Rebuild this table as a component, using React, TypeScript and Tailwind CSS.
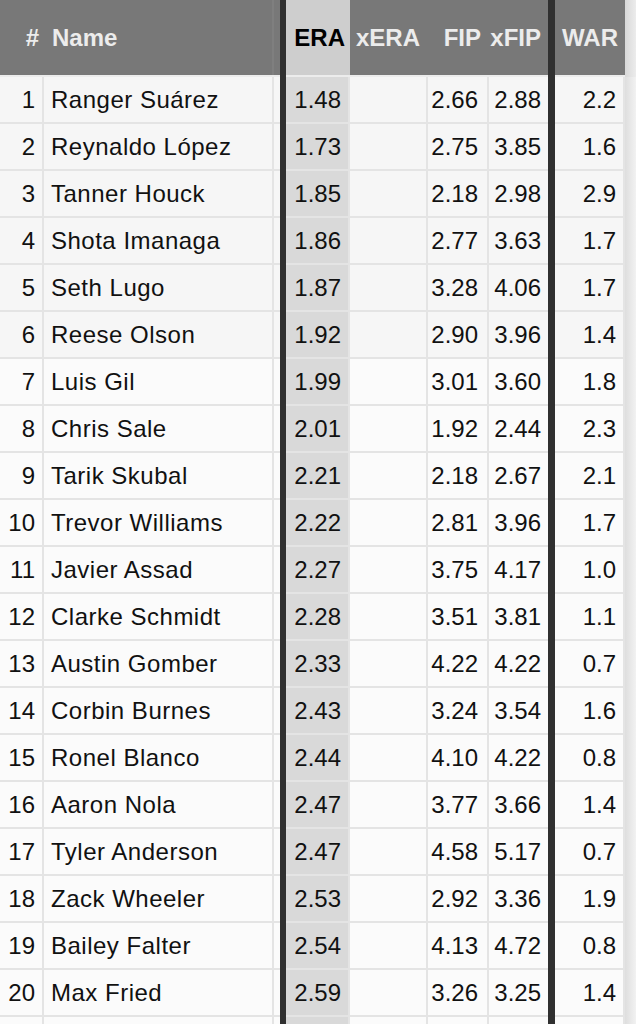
const pitchers = [
  { rank: 1, name: "Ranger Suárez", era: "1.48", fip: "2.66", xfip: "2.88", war: "2.2" },
  { rank: 2, name: "Reynaldo López", era: "1.73", fip: "2.75", xfip: "3.85", war: "1.6" },
  { rank: 3, name: "Tanner Houck", era: "1.85", fip: "2.18", xfip: "2.98", war: "2.9" },
  { rank: 4, name: "Shota Imanaga", era: "1.86", fip: "2.77", xfip: "3.63", war: "1.7" },
  { rank: 5, name: "Seth Lugo", era: "1.87", fip: "3.28", xfip: "4.06", war: "1.7" },
  { rank: 6, name: "Reese Olson", era: "1.92", fip: "2.90", xfip: "3.96", war: "1.4" },
  { rank: 7, name: "Luis Gil", era: "1.99", fip: "3.01", xfip: "3.60", war: "1.8" },
  { rank: 8, name: "Chris Sale", era: "2.01", fip: "1.92", xfip: "2.44", war: "2.3" },
  { rank: 9, name: "Tarik Skubal", era: "2.21", fip: "2.18", xfip: "2.67", war: "2.1" },
  { rank: 10, name: "Trevor Williams", era: "2.22", fip: "2.81", xfip: "3.96", war: "1.7" },
  { rank: 11, name: "Javier Assad", era: "2.27", fip: "3.75", xfip: "4.17", war: "1.0" },
  { rank: 12, name: "Clarke Schmidt", era: "2.28", fip: "3.51", xfip: "3.81", war: "1.1" },
  { rank: 13, name: "Austin Gomber", era: "2.33", fip: "4.22", xfip: "4.22", war: "0.7" },
  { rank: 14, name: "Corbin Burnes", era: "2.43", fip: "3.24", xfip: "3.54", war: "1.6" },
  { rank: 15, name: "Ronel Blanco", era: "2.44", fip: "4.10", xfip: "4.22", war: "0.8" },
  { rank: 16, name: "Aaron Nola", era: "2.47", fip: "3.77", xfip: "3.66", war: "1.4" },
  { rank: 17, name: "Tyler Anderson", era: "2.47", fip: "4.58", xfip: "5.17", war: "0.7" },
  { rank: 18, name: "Zack Wheeler", era: "2.53", fip: "2.92", xfip: "3.36", war: "1.9" },
  { rank: 19, name: "Bailey Falter", era: "2.54", fip: "4.13", xfip: "4.72", war: "0.8" },
  { rank: 20, name: "Max Fried", era: "2.59", fip: "3.26", xfip: "3.25", war: "1.4" },
  { rank: 0, name: "", era: "", fip: "", xfip: "", war: "" },
];

const cell = "flex items-center h-full border-b-2 border-[#e4e4e4]";

const App = () => {
  return (
    <div className="w-[636px] h-[1024px] overflow-hidden bg-[#ececec] font-['Liberation_Sans',Arial,sans-serif] text-[24px]">
      {/* header */}
      <div className="flex h-[77px] font-bold">
        <div className="flex items-center justify-end w-[44px] h-[75px] pr-[5px] bg-[#787878] text-[#ececec]">#</div>
        <div className="flex items-center w-[230px] h-[75px] pl-[8px] bg-[#787878] text-[#ececec] border-r-2 border-[#7f7f7f]">Name</div>
        <div className="w-[6px] h-[75px] bg-[#787878]" />
        <div className="w-[6px] h-full bg-[#303030]" />
        <div className="flex items-center justify-end w-[64px] h-[75px] pr-[5px] bg-[#cecece] text-black">ERA</div>
        <div className="flex items-center justify-end w-[78px] h-[75px] pr-[8px] bg-[#787878] text-[#ececec]">xERA</div>
        <div className="flex items-center justify-end w-[61px] h-[75px] pr-[8px] bg-[#787878] text-[#ececec]">FIP</div>
        <div className="flex items-center justify-end w-[59px] h-[75px] pr-[7px] bg-[#787878] text-[#ececec]">xFIP</div>
        <div className="w-[7px] h-full bg-[#303030]" />
        <div className="flex items-center justify-end w-[70px] h-[75px] pr-[7px] bg-[#787878] text-[#ececec]">WAR</div>
        <div className="flex-1 h-full bg-gradient-to-r from-[#d8d8d8] to-[#ececec]" />
      </div>
      {pitchers.map((p, i) => (
        <div key={i} className={`flex h-[47px] text-[#111] ${i < 6 ? "bg-[#f6f6f6]" : "bg-[#fbfbfb]"}`}>
          <div className={`${cell} justify-end w-[44px] pr-[7px] border-r-2`}>{p.rank || ""}</div>
          <div className={`${cell} w-[230px] pl-[7px] border-r-2 whitespace-nowrap tracking-[0.5px]`}>{p.name}</div>
          <div className={`${cell} w-[6px]`} />
          <div className="w-[6px] h-full bg-[#303030]" />
          <div className={`${cell} justify-end w-[64px] pr-[7px] bg-[#d9d9d9] border-r-2`}>{p.era}</div>
          <div className={`${cell} w-[78px] border-r-2`} />
          <div className={`${cell} justify-end w-[61px] pr-[9px] border-r-2`}>{p.fip}</div>
          <div className={`${cell} justify-end w-[59px] pr-[7px]`}>{p.xfip}</div>
          <div className="w-[7px] h-full bg-[#303030]" />
          <div className={`${cell} justify-end w-[70px] pr-[7px] border-r-2`}>{p.war}</div>
          <div className="flex-1 h-full bg-gradient-to-r from-[#dedede] to-[#f2f2f2]" />
        </div>
      ))}
    </div>
  );
};

export default App;
